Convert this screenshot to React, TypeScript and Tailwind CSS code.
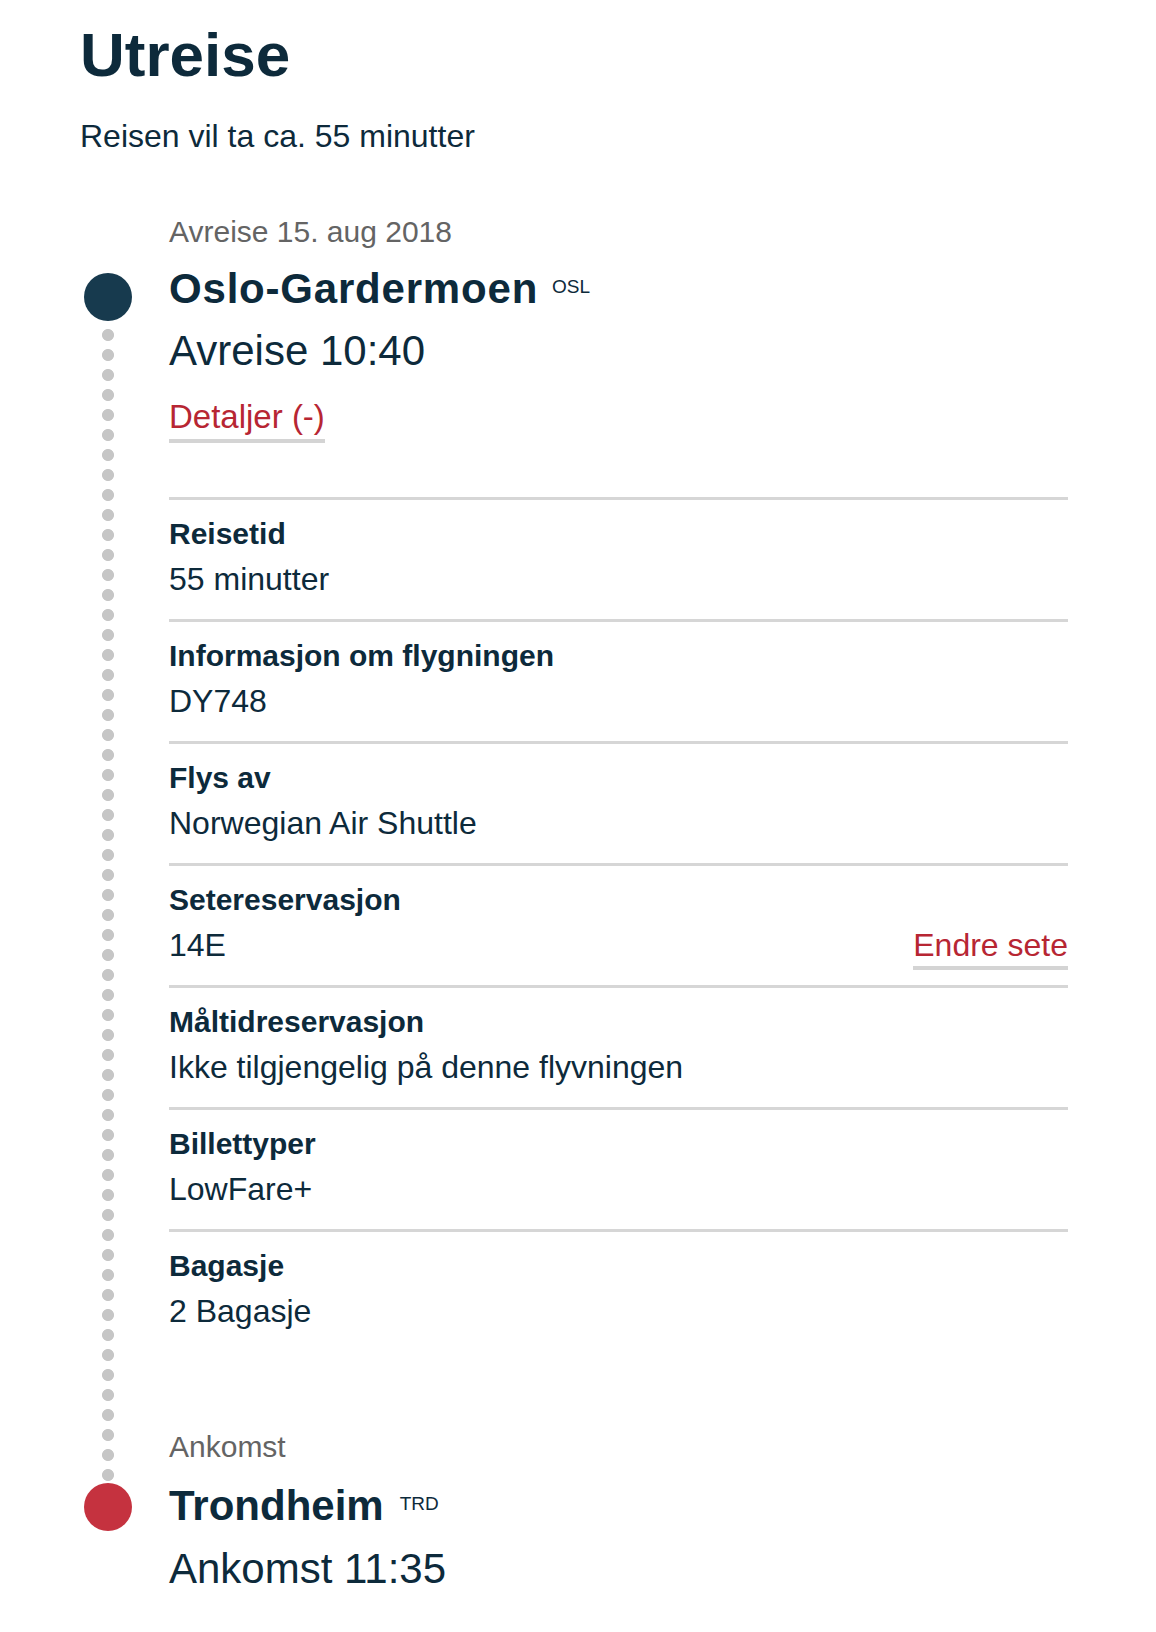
// Utreise: reiseplan med tidslinje og detaljer for flyvningen
const detaljer = [
  { label: "Reisetid", value: "55 minutter" },
  { label: "Informasjon om flygningen", value: "DY748" },
  { label: "Flys av", value: "Norwegian Air Shuttle" },
  { label: "Setereservasjon", value: "14E", action: "Endre sete" },
  { label: "Måltidreservasjon", value: "Ikke tilgjengelig på denne flyvningen" },
  { label: "Billettyper", value: "LowFare+" },
  { label: "Bagasje", value: "2 Bagasje" },
];

export default function App() {
  return (
    <div className="min-h-screen bg-white pl-[80px] pr-[88px] pt-6 font-['Liberation_Sans',Arial,sans-serif] text-[#0d2a3b]">
      <h1 className="text-[62px] leading-none font-bold">Utreise</h1>
      <p className="mt-[32px] text-[32px] leading-[36px]">Reisen vil ta ca. 55 minutter</p>

      <div className="mt-[60px] grid grid-cols-[56px_1fr] gap-x-[33px]">
        {/* avreise */}
        <div />
        <div className="pb-[23px] text-[30px] leading-[36px] text-[#646464]">Avreise 15. aug 2018</div>

        <div className="justify-self-center w-12 h-12 rounded-full bg-[#173a4e]" />
        <div className="h-12">
          <div className="text-[42px] leading-[31px] font-bold tracking-[0.8px] whitespace-nowrap">
            Oslo-Gardermoen
            <span className="ml-[14px] text-[19px] leading-none font-normal tracking-normal align-[10px]">OSL</span>
          </div>
        </div>

        {/* prikket linje */}
        <div className="justify-self-center w-3 bg-[radial-gradient(circle_at_6px_14px,#c6c6c6_5.6px,transparent_6.4px)] bg-[length:12px_20px] bg-repeat-y" />
        <div className="pb-[18px]">
          <div className="mt-[6px] text-[42px] leading-[48px]">Avreise 10:40</div>
          <a className="mt-[20px] inline-block border-b-4 border-[#d4d4d4] text-[33px] leading-[44px] text-[#b72633]">
            Detaljer (-)
          </a>

          <div className="mt-[54px]">
            {detaljer.map((rad) => (
              <div key={rad.label} className="border-t-[3px] border-[#d6d6d6] pt-[12px] pb-[17px]">
                <div className="text-[30px] leading-[44px] font-bold">{rad.label}</div>
                <div className="flex h-[46px] items-baseline justify-between">
                  <span className="text-[32px] leading-[46px]">{rad.value}</span>
                  {rad.action && (
                    <a className="border-b-4 border-[#d4d4d4] text-[32px] leading-[42px] text-[#b72633]">
                      {rad.action}
                    </a>
                  )}
                </div>
              </div>
            ))}
          </div>

          <div className="mt-[78px] text-[30px] leading-[36px] text-[#646464]">Ankomst</div>
        </div>

        {/* ankomst */}
        <div className="justify-self-center w-12 h-12 rounded-full bg-[#c5323f]" />
        <div className="h-12">
          <div className="text-[42px] leading-[46px] font-bold whitespace-nowrap">
            Trondheim
            <span className="ml-[16px] text-[19px] leading-none font-normal align-[10px]">TRD</span>
          </div>
        </div>

        <div />
        <div className="mt-[14px] text-[42px] leading-[48px]">Ankomst 11:35</div>
      </div>
    </div>
  );
}
